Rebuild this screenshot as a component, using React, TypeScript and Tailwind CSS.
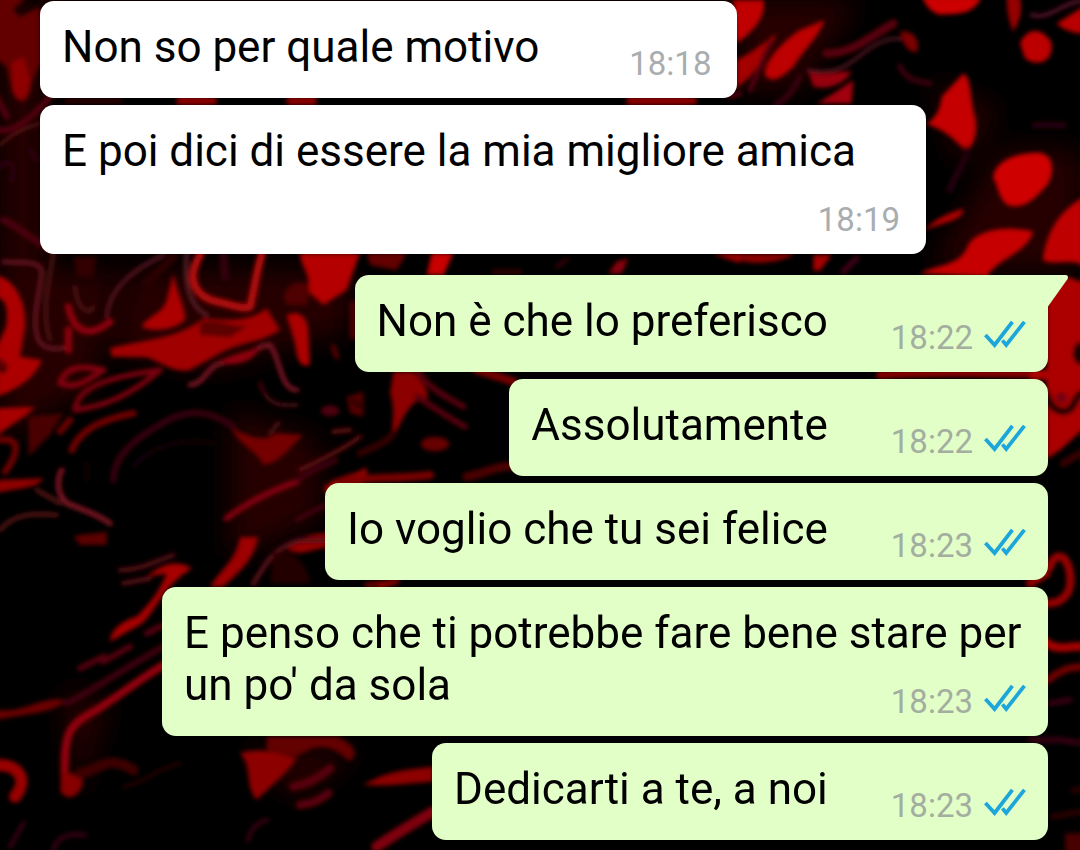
type Message = {
  id: number;
  text: string;
  time: string;
  mine: boolean;
  tail?: boolean;
};

const messages: Message[] = [
  { id: 1, text: 'Non so per quale motivo', time: '18:18', mine: false },
  { id: 2, text: 'E poi dici di essere la mia migliore amica', time: '18:19', mine: false },
  { id: 3, text: 'Non è che lo preferisco', time: '18:22', mine: true, tail: true },
  { id: 4, text: 'Assolutamente', time: '18:22', mine: true },
  { id: 5, text: 'Io voglio che tu sei felice', time: '18:23', mine: true },
  { id: 6, text: "E penso che ti potrebbe fare bene stare per un po' da sola", time: '18:23', mine: true },
  { id: 7, text: 'Dedicarti a te, a noi', time: '18:23', mine: true },
];

function DoubleCheck() {
  return (
    <svg
      className="h-[30px] w-[42px]"
      viewBox="0 0 42 30"
      fill="none"
      stroke="#1ca6dc"
      strokeWidth="3.8"
      role="img"
      aria-label="Letto"
    >
      <path d="M1.4 16 10.6 26 28.4 2.8" />
      <path d="M18.4 21.4 22.2 26 40.4 2.8" />
    </svg>
  );
}

function Tail() {
  return (
    <svg className="absolute top-0 left-full -ml-px h-8 w-[22px]" viewBox="0 0 22 32" fill="#e1ffc7">
      <path d="M0 0H18.6C20.8 0 21.6 2.4 20.4 4.2L1 31.5H0Z" />
    </svg>
  );
}

function Bubble({ message }: { message: Message }) {
  const { text, time, mine, tail } = message;

  return (
    <li
      className={`relative flow-root max-w-[886px] rounded-[14px] py-5 pl-[22px] ${
        mine ? 'self-end bg-[#e1ffc7] pr-[22px]' : 'self-start bg-white pr-[26px]'
      } ${tail ? 'mt-3.5 rounded-tr-none' : ''}`}
    >
      <span className="text-[44px] leading-[52px] text-black">{text}</span>
      <span
        className={`float-right flex items-start gap-[11px] pt-7 text-[33px] leading-[29px] ${
          mine ? 'ml-[63px] text-[#a3aea0]' : 'ml-[90px] text-[#a9adb0]'
        }`}
      >
        <time>{time}</time>
        {mine && (
          <span className="-mt-1 -mb-1">
            <DoubleCheck />
          </span>
        )}
      </span>
      {tail && <Tail />}
    </li>
  );
}

// Black and red liquid wallpaper, drawn in patches at three times their size
function Wallpaper() {
  return (
    <svg
      className="absolute inset-0 h-full w-full"
      viewBox="0 0 1080 850"
      preserveAspectRatio="xMidYMid slice"
      fill="none"
      aria-hidden="true"
    >
      <defs>
        <filter id="soft" x="-10%" y="-10%" width="120%" height="120%">
          <feGaussianBlur stdDeviation="2" />
        </filter>
        <filter id="haze" x="-10%" y="-10%" width="120%" height="120%">
          <feGaussianBlur stdDeviation="14" />
        </filter>
      </defs>
      <rect width="1080" height="850" fill="#000" />
      <g filter="url(#haze)" fill="#260000">
        <path d="M0 0H45V280H0ZM0 270H120L90 390 0 440ZM130 270H350V330L210 370 110 350Z" />
        <path d="M740 0H860L800 90H740ZM930 80 1000 110 960 170ZM1000 150H1080V270H930Z" />
        <path d="M230 410 320 440 320 520 230 560ZM240 750H360L300 800ZM60 690 110 700 80 800Z" />
      </g>
      <g filter="url(#soft)" strokeLinecap="round" strokeLinejoin="round">
        {/* top left edge */}
        <g transform="scale(0.3333)">
          <path d="M-20 -20H90L40 30 60 50 120 20V190L95 250C90 320 50 320 35 270L20 200 -20 170Z" fill="#620000" />
          <path d="M35 190 70 170 90 240C85 310 50 310 38 270Z" fill="#8e0000" />
          <path d="M-10 290 20 350M-10 390C40 400 90 360 150 290" stroke="#52000c" strokeWidth="18" />
          <path d="M0 435C40 400 60 390 120 370" stroke="#5e1414" strokeWidth="8" />
          <path d="M0 500C30 470 50 500 35 540M90 450 110 480" stroke="#2c0010" strokeWidth="16" />
          <path d="M10 660C60 680 90 720 150 745" stroke="#4a0008" strokeWidth="22" />
          <path d="M120 0H2210" stroke="#3a1010" strokeWidth="5" />
          <path d="M200 303H360M880 303H940" stroke="#2a0000" strokeWidth="16" />
          <path d="M540 303H640M870 303H940M1890 303H2080" stroke="#920000" strokeWidth="22" />
        </g>

        {/* top right corner */}
        <g transform="translate(720 0) scale(0.3333)">
          <path d="M40 0H130C140 40 110 90 50 130Z" fill="#c00000" />
          <path d="M50 180C90 160 130 130 170 100L150 150 90 230 50 265Z" fill="#a40000" />
          <path d="M315 60C290 120 250 150 220 200 180 240 150 250 135 225 130 190 180 130 240 90Z" fill="#bd0005" />
          <path d="M150 130 90 270M60 280 30 290" stroke="#56000e" strokeWidth="14" />
          <path d="M320 160C390 160 420 130 520 70" stroke="#580008" strokeWidth="26" />
          <path d="M260 210C360 230 400 180 450 145 500 110 560 100 590 150" stroke="#501620" strokeWidth="10" />
          <path d="M265 215C320 230 360 210 395 215 370 260 310 270 280 260Z" fill="#960008" />
          <path d="M540 95C590 90 600 130 590 155 570 160 550 140 540 95Z" fill="#7c0000" />
          <path d="M290 310C330 290 370 260 400 240L395 310Z" fill="#a1000a" />
          <path d="M170 310C200 300 220 270 240 230M540 200C570 250 590 240 630 250" stroke="#38000e" strokeWidth="18" />
          <path d="M605 -10H785C760 50 700 40 660 44 630 35 620 20 605 -10Z" fill="#cc0000" />
          <path d="M860 -10H900C910 40 895 70 880 95 865 60 860 30 860 -10Z" fill="#960000" />
          <path d="M935 45C990 60 1020 10 1090 0" stroke="#4a1022" strokeWidth="14" />
          <path d="M1010 70 1090 20V100C1060 100 1030 90 1010 70Z" fill="#b80000" />
          <path d="M900 130C920 80 970 80 995 130 1000 190 950 200 915 175Z" fill="#bc0000" />
          <path d="M730 220C755 230 750 300 765 350 775 400 760 440 740 450 715 440 700 400 620 372 650 350 660 330 665 290Z" fill="#c40000" />
          <path d="M945 375H1030M740 450C735 500 700 530 690 570" stroke="#200008" strokeWidth="22" />
          <path d="M820 535C820 480 900 455 960 458 1000 465 1005 510 985 550 950 590 920 625 870 618 835 600 840 570 820 535Z" fill="#cf0000" />
          <path d="M615 690C650 650 690 640 730 625 730 660 690 660 615 690Z" fill="#b00000" />
          <path d="M600 820C660 790 720 800 745 735 770 690 860 675 940 695 920 760 840 770 800 830Z" fill="#c60000" />
          <path d="M1090 590C1010 640 980 700 968 780 1000 800 1060 770 1090 800Z" fill="#bf0000" />
          <path d="M0 762H225C160 800 60 795 0 762Z" fill="#8c0000" />
          <path d="M280 765H335L300 812H280Z" fill="#a60000" />
          <path d="M370 815 410 775" stroke="#3c0018" strokeWidth="18" />
        </g>

        {/* strip between the two groups of bubbles */}
        <g transform="translate(340 230) scale(0.3333)">
          <path d="M80 70H200L170 120 90 105Z" fill="#640005" />
          <path d="M275 70H340L310 135H260Z" fill="#c80000" />
          <path d="M460 125H540M650 110 680 90" stroke="#300008" strokeWidth="14" />
          <path d="M805 130 830 95 865 85 845 130Z" fill="#8a0508" />
          <path d="M1120 72H1200V100Z" fill="#9a0000" />
        </g>

        {/* left side */}
        <g transform="translate(0 250) scale(0.3333)">
          <path fillRule="evenodd" d="M-10 75C60 95 80 180 75 230L60 320 125 330C110 380 50 420 -10 440ZM-10 140C20 150 25 180 18 230L-10 290Z" fill="#ac0000" />
          <path d="M0 330C-5 380 20 370 15 340" stroke="#1c0000" strokeWidth="10" />
          <path d="M10 35C60 40 110 30 125 60 125 120 90 200 115 270 130 300 170 300 210 290" stroke="#641420" strokeWidth="13" />
          <path d="M160 10C150 90 120 180 150 270M225 110C230 180 270 200 280 170" stroke="#501414" strokeWidth="11" />
          <path d="M220 20H290L280 80H230Z" fill="#300000" />
          <path d="M205 170C220 240 260 270 330 215M205 240 205 300" stroke="#8a0008" strokeWidth="22" />
          <path d="M320 200C330 110 400 60 490 15" stroke="#581824" strokeWidth="11" />
          <path d="M440 100 520 20" stroke="#2a0000" strokeWidth="26" />
          <path d="M520 70C530 130 560 180 555 210 530 235 470 250 425 230 440 200 490 190 500 150Z" fill="#ac0000" />
          <path d="M560 10C550 100 570 170 620 195" stroke="#521a24" strokeWidth="13" />
          <path d="M600 15C550 100 600 145 650 155 700 165 730 180 750 170 765 110 770 60 785 15" stroke="#b00808" strokeWidth="24" />
          <path d="M670 20 675 80" stroke="#36000a" strokeWidth="24" />
          <path d="M330 295C420 270 530 270 610 205 680 210 740 220 800 175L840 240C780 280 720 275 660 310L570 360C520 370 490 340 440 322L335 320Z" fill="#a00000" />
          <path d="M600 215C660 205 700 235 745 225L690 262 600 255Z" fill="#5c0000" />
          <path d="M570 405C620 400 620 340 680 335 740 340 770 280 810 285 840 320 840 420 890 420" stroke="#761420" strokeWidth="15" />
          <path d="M655 335C700 310 760 300 780 290 760 340 700 350 655 335Z" fill="#8e0008" />
          <path d="M900 10H1080L1040 120 970 165 920 120C940 80 900 50 900 10Z" fill="#b40000" />
          <path d="M850 140C870 90 900 90 930 110L920 165H860Z" fill="#500000" />
          <path d="M860 195C900 180 920 200 925 240L930 345C900 355 890 330 885 280Z" fill="#ac0004" />
          <path d="M1058 160V260M1000 290 1010 320" stroke="#540000" strokeWidth="16" />
          <path d="M780 400C800 460 830 470 890 465" stroke="#40080c" strokeWidth="13" />
          <path d="M180 400C200 340 260 350 310 360 260 390 230 420 180 400Z" stroke="#800008" strokeWidth="18" />
          <path d="M225 480C230 410 330 380 480 360 400 430 320 470 225 480Z" stroke="#780008" strokeWidth="17" />
          <path d="M215 600C240 540 300 510 400 490" stroke="#720006" strokeWidth="20" />
          <path d="M-10 475 105 470C70 510 30 520 -10 560Z" fill="#a80000" />
          <path d="M85 500 190 490 150 555 85 620Z" fill="#4a0000" />
          <path d="M0 570C70 560 50 620 15 665M180 545 210 510" stroke="#720006" strokeWidth="19" />
          <path d="M-10 690 130 685C110 720 60 710 -10 730Z" fill="#8e0005" />
          <path d="M185 660C170 690 170 730 200 760 250 780 290 790 330 820" stroke="#7c1420" strokeWidth="16" />
          <path d="M110 720 180 760M0 840C40 790 100 790 170 795" stroke="#5c1818" strokeWidth="12" />
          <path d="M340 690C340 620 400 570 470 530 560 470 630 480 700 530" stroke="#34000e" strokeWidth="20" />
          <path d="M400 650C450 590 550 560 640 580M260 640V690" stroke="#180008" strokeWidth="12" />
          <path d="M695 535C750 560 790 580 830 550L910 555C870 590 840 640 790 645 770 600 720 590 695 535Z" fill="#740000" />
          <path d="M810 550 835 520" stroke="#461010" strokeWidth="14" />
          <ellipse cx="990" cy="482" rx="28" ry="16" fill="#50000e" />
          <path d="M1040 440 1090 425V500L1050 490Z" fill="#540000" />
          <path d="M900 660C960 630 1030 600 1080 560M1000 545 1050 540" stroke="#5a080e" strokeWidth="15" />
          <path d="M970 715C1010 670 1060 680 1100 650V700L980 730Z" fill="#980000" />
          <path d="M680 805C750 750 820 720 890 695" stroke="#80000c" strokeWidth="19" />
          <path d="M890 690C960 650 970 650 1010 630M890 810 975 765" stroke="#44000e" strokeWidth="13" />
          <path d="M860 900C900 860 930 850 985 850V890L900 910Z" fill="#940000" />
          <path d="M220 860C250 850 290 850 320 845V885H240Z" fill="#5c0000" />
        </g>

        {/* between the second and third outgoing bubbles */}
        <g transform="translate(360 370) scale(0.3333)">
          <path d="M100 5H160C190 40 210 60 200 90 150 80 130 150 100 200 90 160 110 130 90 70Z" fill="#8c0000" />
          <path d="M175 5C210 60 260 80 310 110M170 80C220 110 260 140 315 170" stroke="#540008" strokeWidth="18" />
          <path d="M350 0 460 35" stroke="#760000" strokeWidth="24" />
          <path d="M0 250C40 230 80 220 100 190M-20 95 5 110" stroke="#340000" strokeWidth="20" />
          <ellipse cx="225" cy="222" rx="42" ry="22" fill="#680004" />
          <path d="M-60 335C60 315 100 330 210 315" stroke="#780000" strokeWidth="24" />
          <path d="M320 320C380 310 420 280 480 290" stroke="#4c0000" strokeWidth="26" />
          <path d="M20 645 90 638" stroke="#7c0000" strokeWidth="14" />
          <path d="M1560 15C1700 5 1850 10 2050 12" stroke="#8c0000" strokeWidth="22" />
        </g>

        {/* bottom left */}
        <g transform="translate(0 540) scale(0.3333)">
          <path d="M360 90C420 90 450 70 520 45M370 130 450 115" stroke="#540c16" strokeWidth="14" />
          <path d="M440 110C490 65 540 60 575 85 540 110 510 130 480 180 450 220 440 250 400 265L330 305C330 270 370 240 410 230 450 190 480 150 500 100Z" fill="#a60004" />
          <path d="M720 -10H775C760 70 700 110 670 140H630C660 90 710 60 720 -10Z" fill="#9c0000" />
          <path d="M760 130C800 70 810 30 900 0H980" stroke="#540e18" strokeWidth="16" />
          <path d="M820 40C860 30 920 50 930 130H810Z" fill="#240000" />
          <path d="M310 365 390 320M440 280 490 255M240 385 310 350" stroke="#54000e" strokeWidth="18" />
          <path d="M200 490C280 450 330 410 490 320" stroke="#3c000c" strokeWidth="20" />
          <path d="M490 375C400 430 340 480 280 515 200 560 190 580 195 740" stroke="#92040a" strokeWidth="24" />
          <path d="M190 690C220 710 260 700 245 740 230 780 190 780 180 750Z" fill="#860000" />
          <path d="M240 700C300 690 320 640 400 690" stroke="#3c0000" strokeWidth="32" />
          <path d="M370 740C430 730 460 690 540 670" stroke="#280008" strokeWidth="10" />
          <path d="M-10 510C80 520 110 470 195 480 170 520 80 520 -10 540Z" fill="#6c0004" />
          <path d="M-20 675C60 670 85 720 45 770" stroke="#9a0000" strokeWidth="36" />
          <path d="M30 920 70 850M160 930C170 890 200 880 255 885" stroke="#340012" strokeWidth="14" />
          <path d="M720 640C780 620 840 640 890 655 860 700 820 730 770 780 730 730 760 680 720 640Z" fill="#8c0000" />
          <path d="M800 590H1010C1060 610 1080 640 1050 665 980 600 940 620 890 650L800 630Z" fill="#640000" />
          <path d="M880 740C930 730 960 710 990 685M900 795C940 790 960 780 985 760" stroke="#580008" strokeWidth="26" />
          <path d="M745 900C750 870 770 850 800 840" stroke="#2e000c" strokeWidth="16" />
          <path d="M1090 735C1160 695 1200 690 1300 680V725C1220 730 1160 740 1090 735Z" fill="#8c0000" />
          <path d="M1130 920C1190 880 1240 850 1300 815" stroke="#80000c" strokeWidth="32" />
          <path d="M1140 138 1190 124" stroke="#8c0000" strokeWidth="16" />
        </g>

        {/* right edge */}
        <g transform="translate(1030 270) scale(0.3333)">
          <path d="M50 90 110 20 170 40V470C130 500 100 540 50 566V330H0V300H50Z" fill="#ac0000" />
          <ellipse cx="152" cy="250" rx="24" ry="34" fill="#180000" />
          <path d="M50 372C62 430 116 440 132 400 140 380 150 370 165 365" stroke="#1c0000" strokeWidth="22" />
          <circle cx="94" cy="384" r="18" fill="#78000a" />
          <path d="M100 580 160 545" stroke="#380000" strokeWidth="22" />
          <path d="M0 940 50 910M60 890C70 850 105 845 118 900 130 960 105 1000 55 1000" stroke="#980000" strokeWidth="24" />
          <path d="M40 1110C80 1150 110 1125 160 1130" stroke="#a60000" strokeWidth="26" />
          <path d="M55 1230C90 1200 120 1190 160 1190" stroke="#700004" strokeWidth="22" />
          <path d="M60 1300 120 1290M0 1410H90L160 1420" stroke="#340012" strokeWidth="18" />
          <path d="M130 1560H160M70 1640 150 1625" stroke="#280006" strokeWidth="20" />
          <path d="M105 1690H160V1750H105Z" fill="#480000" />
        </g>
      </g>
    </svg>
  );
}

export default function App() {
  return (
    <main className="relative min-h-screen overflow-hidden bg-black font-[Roboto,'Noto_Sans',sans-serif]">
      <Wallpaper />
      <ol className="relative flex flex-col gap-[7px] pt-px pr-8 pb-2.5 pl-10">
        {messages.map((message) => (
          <Bubble key={message.id} message={message} />
        ))}
      </ol>
    </main>
  );
}
